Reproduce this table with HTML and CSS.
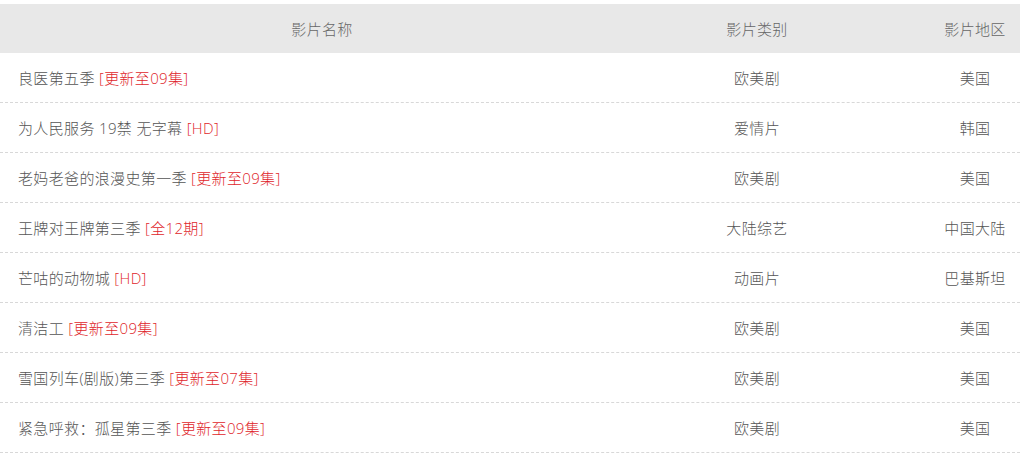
FILE: index.html
```html
<!DOCTYPE html>
<html lang="zh">
<head>
<meta charset="utf-8">
<link rel="stylesheet" href="styles.css">
</head>
<body>
<div class="list">
  <div class="row head">
    <div class="c-name">影片名称</div>
    <div class="c-type">影片类别</div>
    <div class="c-area">影片地区</div>
  </div>
  <div class="row">
    <div class="c-name">良医第五季 <span class="tag">[更新至09集]</span></div>
    <div class="c-type">欧美剧</div>
    <div class="c-area">美国</div>
  </div>
  <div class="row">
    <div class="c-name">为人民服务 19禁 无字幕 <span class="tag">[HD]</span></div>
    <div class="c-type">爱情片</div>
    <div class="c-area">韩国</div>
  </div>
  <div class="row">
    <div class="c-name">老妈老爸的浪漫史第一季 <span class="tag">[更新至09集]</span></div>
    <div class="c-type">欧美剧</div>
    <div class="c-area">美国</div>
  </div>
  <div class="row">
    <div class="c-name">王牌对王牌第三季 <span class="tag">[全12期]</span></div>
    <div class="c-type">大陆综艺</div>
    <div class="c-area">中国大陆</div>
  </div>
  <div class="row">
    <div class="c-name">芒咕的动物城 <span class="tag">[HD]</span></div>
    <div class="c-type">动画片</div>
    <div class="c-area">巴基斯坦</div>
  </div>
  <div class="row">
    <div class="c-name">清洁工 <span class="tag">[更新至09集]</span></div>
    <div class="c-type">欧美剧</div>
    <div class="c-area">美国</div>
  </div>
  <div class="row">
    <div class="c-name">雪国列车(剧版)第三季 <span class="tag">[更新至07集]</span></div>
    <div class="c-type">欧美剧</div>
    <div class="c-area">美国</div>
  </div>
  <div class="row">
    <div class="c-name">紧急呼救：孤星第三季 <span class="tag">[更新至09集]</span></div>
    <div class="c-type">欧美剧</div>
    <div class="c-area">美国</div>
  </div>
</div>
</body>
</html>
```

FILE: styles.css
```css
html, body {
  margin: 0;
  padding: 0;
  background: #fff;
}
body {
  font-family: "Open Sans", "Noto Sans CJK SC", "Microsoft YaHei", sans-serif;
  font-size: 15px;
  font-weight: 300;
  letter-spacing: 0.35px;
  color: #555;
}
.list {
  width: 1020px;
  padding-top: 4px;
}
.row {
  display: grid;
  grid-template-columns: 644px 226px 1fr;
  height: 49px;
  align-items: center;
  border-bottom: 1px dashed #d8d8d8;
}
.row.head {
  background: #e8e8e8;
  border-bottom: none;
  color: #666;
}
.row.head .c-name {
  text-align: center;
  padding-left: 0;
}
.c-name {
  padding-left: 18px;
  white-space: nowrap;
}
.c-type {
  text-align: center;
}
.c-area {
  text-align: center;
  padding-left: 60px;
}
.tag {
  color: #e0262b;
}
```
